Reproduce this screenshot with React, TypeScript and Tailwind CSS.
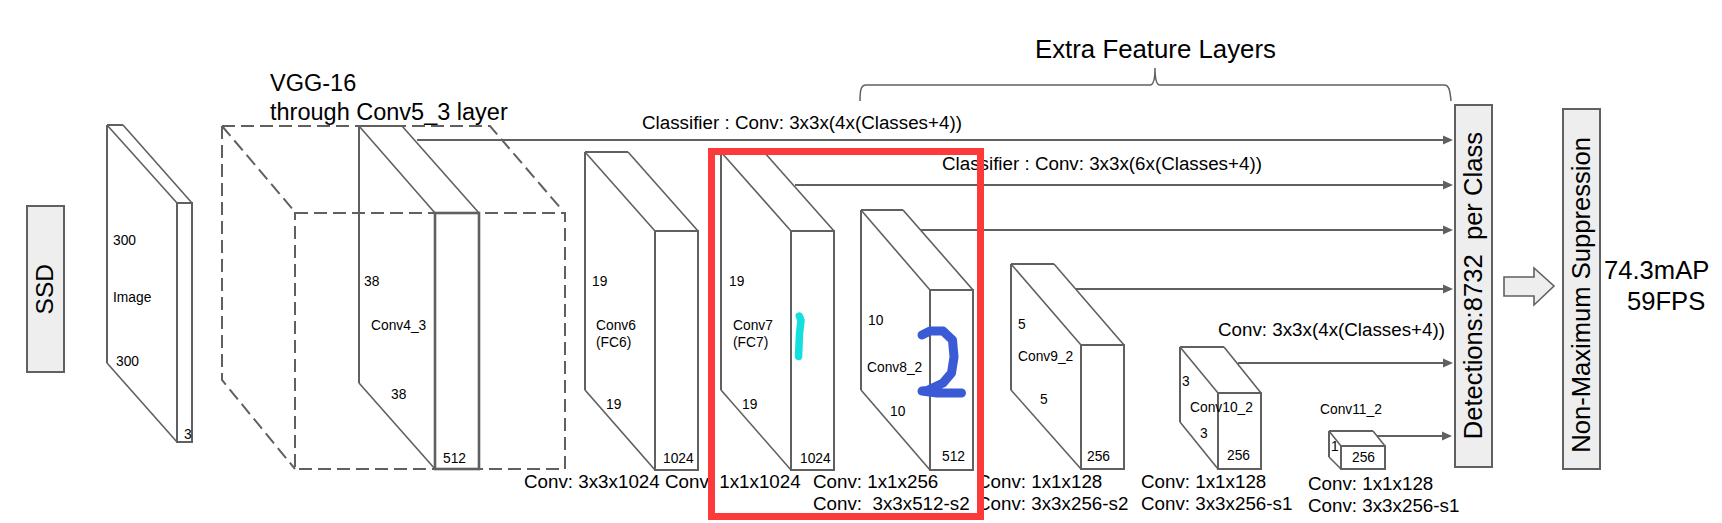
import type React from 'react'

type PrismProps = {
  left: number
  top: number
  bottom: number
  topRight: number
  front: number
  right: number
  frontTop: number
  frontBottom: number
  heavy?: boolean
}

// one conv layer block, drawn as a slab in fake perspective
function Prism({ left, top, bottom, topRight, front, right, frontTop, frontBottom, heavy }: PrismProps) {
  return (
    <g fill="none" stroke="#606060">
      <path strokeWidth="2" d={`M${left} ${top} V${bottom}`} />
      <path strokeWidth="1.6" d={`M${left} ${bottom} L${front} ${frontBottom}`} />
      <path strokeWidth="2" d={`M${left} ${top} H${topRight}`} />
      <path strokeWidth="1.6" d={`M${left} ${top} L${front} ${frontTop}`} />
      <path strokeWidth="1.6" d={`M${topRight} ${top} L${right} ${frontTop}`} />
      <rect
        strokeWidth={heavy ? 2.6 : 2}
        x={front}
        y={frontTop}
        width={right - front}
        height={frontBottom - frontTop}
      />
    </g>
  )
}

function Arrow({ from, y, to = 1453 }: { from: number; y: number; to?: number }) {
  return (
    <g>
      <path fill="none" stroke="#606060" strokeWidth="2" d={`M${from} ${y} H${to - 9}`} />
      <path fill="#606060" d={`M${to} ${y} L${to - 10} ${y - 4.5} V${y + 4.5} Z`} />
    </g>
  )
}

function Small({ className, children }: { className: string; children: React.ReactNode }) {
  return <span className={`absolute text-[13.8px] leading-[16px] whitespace-pre ${className}`}>{children}</span>
}

function Caption({ className, children }: { className: string; children: React.ReactNode }) {
  return <span className={`absolute text-[18.8px] leading-[22px] whitespace-pre ${className}`}>{children}</span>
}

function CaptionPair({ className, first, second }: { className: string; first: string; second: string }) {
  return (
    <div className={`absolute flex flex-col text-[18.8px] leading-[22px] whitespace-pre ${className}`}>
      <span>{first}</span>
      <span>{second}</span>
    </div>
  )
}

export default function App() {
  return (
    <div className="relative h-[523px] w-[1722px] overflow-hidden bg-white font-['Liberation_Sans',sans-serif] text-black">
      <svg className="absolute inset-0" width="1722" height="523" viewBox="0 0 1722 523">
        {/* VGG-16 dashed block */}
        <g fill="none" stroke="#606060" strokeWidth="2" strokeDasharray="13 6">
          <path d="M222 126 H490 L563 211" />
          <path d="M222 126 V380 L295 469" />
          <path d="M222 126 L295 212" />
          <path d="M295 213 H565 V469 H295 Z" />
        </g>

        <Prism left={107} top={125} bottom={363} topRight={123} front={177} right={192} frontTop={203} frontBottom={442} />
        <Prism left={359} top={126} bottom={383} topRight={402} front={435} right={479} frontTop={213} frontBottom={469} heavy />
        <Prism left={585} top={152} bottom={390} topRight={628} front={655} right={698} frontTop={231} frontBottom={470} />
        <Prism left={721} top={152} bottom={390} topRight={764} front={791} right={834} frontTop={231} frontBottom={470} />
        <Prism left={861} top={210} bottom={390} topRight={903} front={930} right={973} frontTop={290} frontBottom={470} />
        <Prism left={1011} top={264} bottom={390} topRight={1054} front={1081} right={1124} frontTop={345} frontBottom={469} />
        <Prism left={1180} top={347} bottom={422} topRight={1224} front={1218} right={1261} frontTop={393} frontBottom={469} />
        <Prism left={1329} top={431} bottom={457} topRight={1373} front={1341} right={1385} frontTop={446} frontBottom={469} />

        <Arrow from={417} y={140} />
        <Arrow from={795} y={185} />
        <Arrow from={921} y={230} />
        <Arrow from={1076} y={289} />
        <Arrow from={1238} y={363} />
        <Arrow from={1377} y={436} to={1452} />

        {/* brace over the extra layers */}
        <path
          fill="none"
          stroke="#606060"
          strokeWidth="1.5"
          d="M860 101 C860 90 861 85 866 85 H1150 C1153 85 1155 80 1155 68 C1155 80 1157 85 1160 85 H1444 C1449 85 1450 90 1451 101"
        />

        {/* arrow towards non-maximum suppression */}
        <path
          fill="#eeeeee"
          stroke="#606060"
          strokeWidth="1.6"
          d="M1504 277 H1534 V268 L1554 286 L1534 305 V296 H1504 Z"
        />
      </svg>

      <div className="absolute left-[26px] top-[205px] flex h-[168px] w-[39px] items-center justify-center border-2 border-[#606060] bg-[#eeeeee]">
        <span className="rotate-180 text-[24.5px] leading-none [writing-mode:vertical-rl]">SSD</span>
      </div>
      <div className="absolute left-[1454px] top-[104px] flex h-[364px] w-[39px] items-center justify-center border-2 border-[#606060] bg-[#eeeeee]">
        <span className="rotate-180 whitespace-pre text-[25.6px] leading-none [writing-mode:vertical-rl]">
          Detections:8732  per Class
        </span>
      </div>
      <div className="absolute left-[1562px] top-[108px] flex h-[362px] w-[39px] items-center justify-center border-2 border-[#606060] bg-[#eeeeee] pt-[11px]">
        <span className="rotate-180 whitespace-pre text-[25.6px] leading-none [writing-mode:vertical-rl]">
          Non-Maximum Suppression
        </span>
      </div>

      <div className="absolute left-[270px] top-[69px] flex flex-col gap-px whitespace-pre text-[23.5px] leading-[28px]">
        <span>VGG-16</span>
        <span>through Conv5_3 layer</span>
      </div>
      <span className="absolute left-[1035px] top-[34px] whitespace-pre text-[25.8px] leading-[30px]">Extra Feature Layers</span>
      <div className="absolute left-[1604px] top-[255px] flex flex-col gap-px text-[25.6px] leading-[30px]">
        <span>74.3mAP</span>
        <span className="pl-[23px]">59FPS</span>
      </div>

      <Caption className="left-[642px] top-[112px]">Classifier : Conv: 3x3x(4x(Classes+4))</Caption>
      <Caption className="left-[942px] top-[153px]">Classifier : Conv: 3x3x(6x(Classes+4))</Caption>
      <Caption className="left-[1218px] top-[319px]">Conv: 3x3x(4x(Classes+4))</Caption>

      <Caption className="left-[524px] top-[471px]">Conv: 3x3x1024 Conv: 1x1x1024</Caption>
      <CaptionPair className="left-[813px] top-[471px]" first="Conv: 1x1x256" second="Conv:  3x3x512-s2" />
      <CaptionPair className="left-[977px] top-[471px]" first="Conv: 1x1x128" second="Conv: 3x3x256-s2" />
      <CaptionPair className="left-[1141px] top-[471px]" first="Conv: 1x1x128" second="Conv: 3x3x256-s1" />
      <CaptionPair className="left-[1308px] top-[473px]" first="Conv: 1x1x128" second="Conv: 3x3x256-s1" />

      <Small className="left-[113px] top-[233px]">300</Small>
      <Small className="left-[113px] top-[290px]">Image</Small>
      <Small className="left-[116px] top-[354px]">300</Small>
      <Small className="left-[184px] top-[427px]">3</Small>

      <Small className="left-[364px] top-[274px]">38</Small>
      <Small className="left-[371px] top-[318px]">Conv4_3</Small>
      <Small className="left-[391px] top-[387px]">38</Small>
      <Small className="left-[443px] top-[451px]">512</Small>

      <Small className="left-[592px] top-[274px]">19</Small>
      <Small className="left-[596px] top-[318px]">Conv6</Small>
      <Small className="left-[596px] top-[335px]">(FC6)</Small>
      <Small className="left-[606px] top-[397px]">19</Small>
      <Small className="left-[663px] top-[451px]">1024</Small>

      <Small className="left-[729px] top-[274px]">19</Small>
      <Small className="left-[733px] top-[318px]">Conv7</Small>
      <Small className="left-[733px] top-[335px]">(FC7)</Small>
      <Small className="left-[742px] top-[397px]">19</Small>
      <Small className="left-[800px] top-[451px]">1024</Small>

      <Small className="left-[868px] top-[313px]">10</Small>
      <Small className="left-[867px] top-[360px]">Conv8_2</Small>
      <Small className="left-[890px] top-[404px]">10</Small>
      <Small className="left-[942px] top-[449px]">512</Small>

      <Small className="left-[1018px] top-[317px]">5</Small>
      <Small className="left-[1018px] top-[349px]">Conv9_2</Small>
      <Small className="left-[1040px] top-[392px]">5</Small>
      <Small className="left-[1087px] top-[449px]">256</Small>

      <Small className="left-[1182px] top-[374px]">3</Small>
      <Small className="left-[1190px] top-[400px]">Conv10_2</Small>
      <Small className="left-[1200px] top-[426px]">3</Small>
      <Small className="left-[1227px] top-[448px]">256</Small>

      <Small className="left-[1320px] top-[402px]">Conv11_2</Small>
      <Small className="left-[1331px] top-[439px]">1</Small>
      <Small className="left-[1352px] top-[450px]">256</Small>

      {/* hand drawn marks on top of the figure */}
      <svg className="absolute inset-0" width="1722" height="523" viewBox="0 0 1722 523">
        <path
          fill="none"
          stroke="#14dfdf"
          strokeWidth="7.5"
          strokeLinecap="round"
          strokeLinejoin="round"
          d="M799.3 316 L801 320.5 L799.5 334 L798.5 356.5"
        />
        <path
          fill="none"
          stroke="#3a5bd5"
          strokeWidth="9"
          strokeLinecap="round"
          strokeLinejoin="round"
          d="M922 335 L930 331 L943 331 L952.5 340 L954 357 L951.5 373 L943 383 L927 390.5 L922 391 L937 393 L961.5 393"
        />
      </svg>

      <div className="absolute left-[708px] top-[148px] h-[372px] w-[276px] border-[7px] border-[#fc3a3a]" />
    </div>
  )
}
